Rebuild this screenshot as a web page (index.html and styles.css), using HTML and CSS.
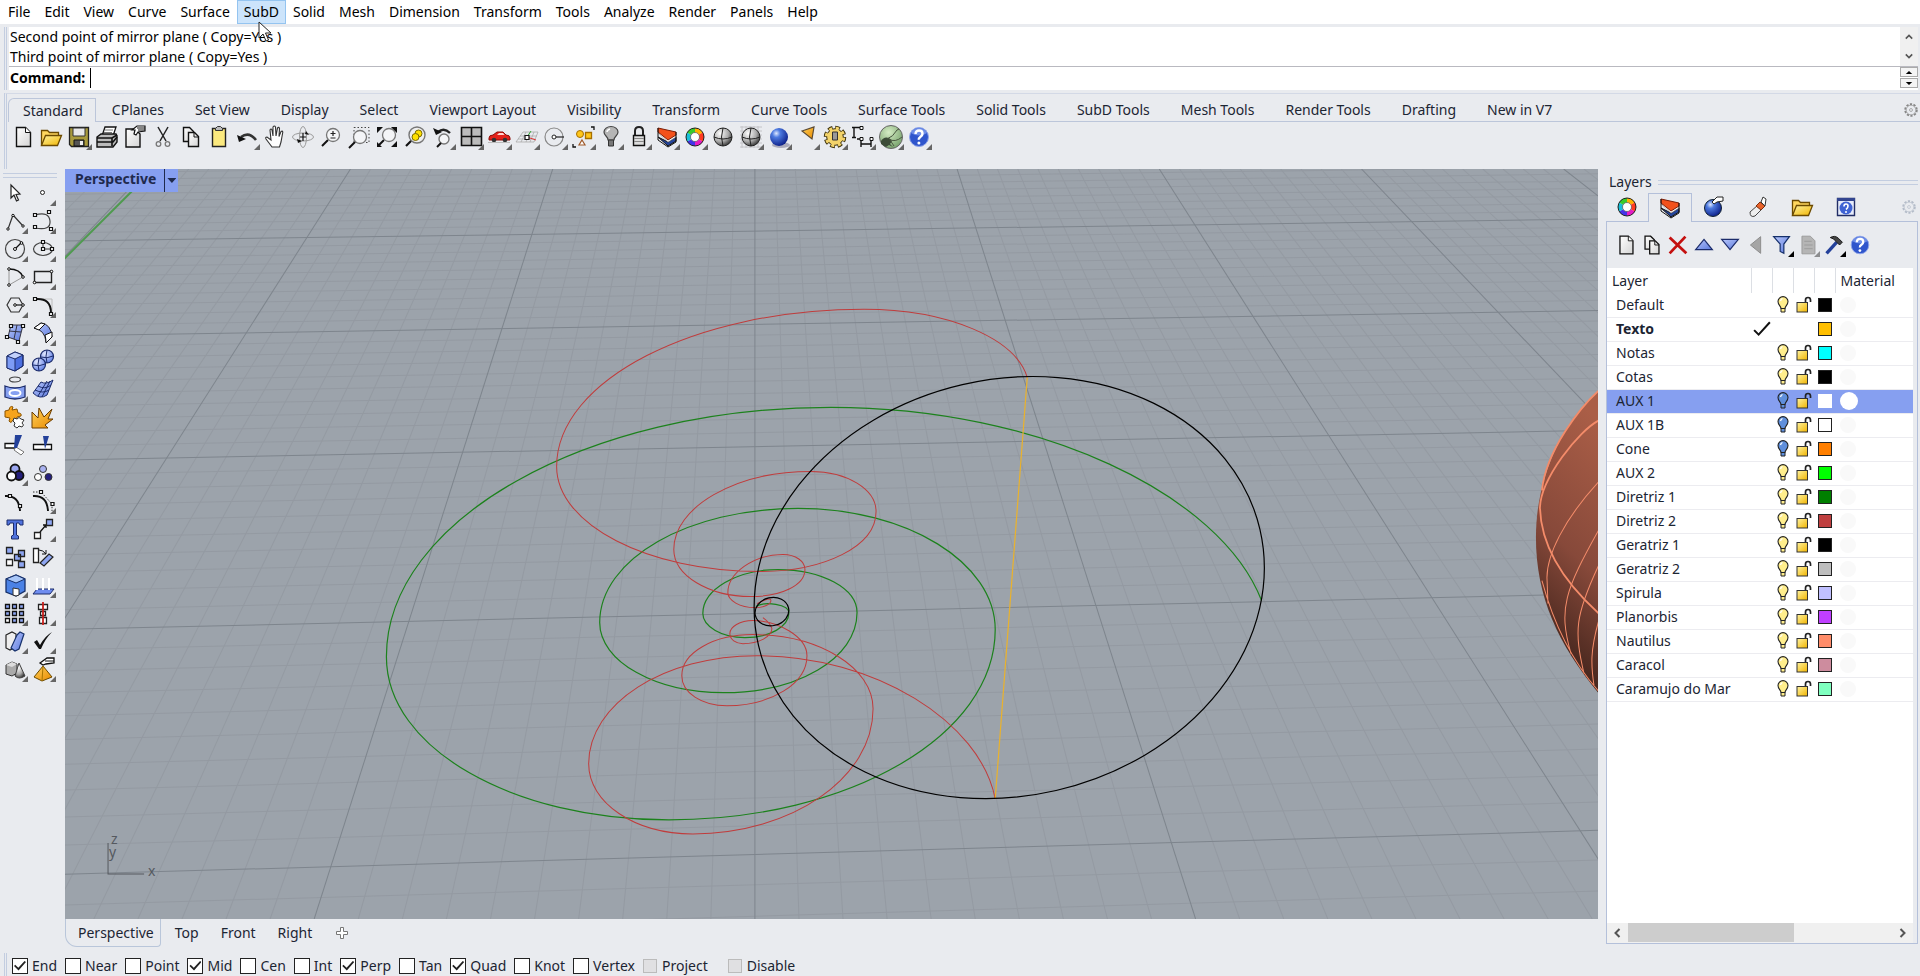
FILE: index.html
```html
<!DOCTYPE html>
<html lang="en">
<head>
    <meta charset="UTF-8">
    <meta name="viewport" content="width=device-width, initial-scale=1.0">
    <title>Rhinoceros</title>
    <link rel="stylesheet" href="styles.css">
</head>
<body>
    <svg class="defs" aria-hidden="true">
        <defs>
            <radialGradient id="gBlue" cx=".35" cy=".3" r=".75"><stop offset="0" stop-color="#dfe9ff"/><stop offset=".3" stop-color="#4d7ae0"/><stop offset="1" stop-color="#0a1c86"/></radialGradient>
            <radialGradient id="gLight" cx=".35" cy=".3" r=".75"><stop offset="0" stop-color="#e4eaff"/><stop offset="1" stop-color="#5c7ce4"/></radialGradient>
            <radialGradient id="gGrey" cx=".35" cy=".3" r=".75"><stop offset="0" stop-color="#fff"/><stop offset=".6" stop-color="#aaa"/><stop offset="1" stop-color="#333"/></radialGradient>
            <radialGradient id="gGreen" cx=".4" cy=".3" r=".8"><stop offset="0" stop-color="#d4ecc4"/><stop offset="1" stop-color="#6d9a62"/></radialGradient>
            <linearGradient id="gYellow" x2="1" y2="1"><stop offset="0" stop-color="#fff3a0"/><stop offset="1" stop-color="#f0b400"/></linearGradient>
            <linearGradient id="gOrange" x2="1" y2="1"><stop offset="0" stop-color="#ffd05a"/><stop offset="1" stop-color="#e88a00"/></linearGradient>
            <linearGradient id="gPage" x2="1" y2="1"><stop offset="0" stop-color="#fff"/><stop offset="1" stop-color="#d4d4d4"/></linearGradient>
            <linearGradient id="gSteel" x2="1" y2="1"><stop offset="0" stop-color="#b9c8fb"/><stop offset="1" stop-color="#5a78dd"/></linearGradient>
            <linearGradient id="gShell" x1=".5" x2=".3" y2="1"><stop offset="0" stop-color="#aa5e47"/><stop offset=".5" stop-color="#87493a"/><stop offset="1" stop-color="#2d1913"/></linearGradient>
        </defs>
        <symbol id="page" viewBox="0 0 28 28"><path d="M7.500 4.500h9l5 5v14h-14z" fill="url(#gPage)" stroke="#111" stroke-width="1.400"/><path d="M16.500 4.500v5h5" fill="#fff" stroke="#111"/></symbol>
        <symbol id="pages" viewBox="0 0 28 28"><path d="M6.500 4.500h6l4 4v10h-10z" fill="url(#gPage)" stroke="#111" stroke-width="1.400"/><path d="M11.500 9.500h6l4 4v10h-10z" fill="url(#gPage)" stroke="#111" stroke-width="1.400"/><path d="M17 9.500v4.500h4.500" fill="none" stroke="#111"/></symbol>
        <symbol id="folder" viewBox="0 0 28 28"><path d="M4.500 22.500v-15h6l2 2h9v4" fill="#ffd75e" stroke="#6b4a00" stroke-width="1.300"/><path d="M4.500 22.500l4-10h16l-4 10z" fill="url(#gYellow)" stroke="#6b4a00" stroke-width="1.300"/></symbol>
        <symbol id="layers" viewBox="0 0 28 28"><path d="M5 14l10 9 8-5v-4l-8 5z" fill="#24449a" stroke="#111"/><path d="M5 10l10 9 8-5v-3z" fill="#fff" stroke="#999" stroke-width=".6"/><path d="M5 5l18 4v3l-8 5L5 9z" fill="#f2511b" stroke="#7c1d05"/><path d="M5 5v12l10 7 8-5V9" fill="none" stroke="#111"/></symbol>
        <symbol id="wheel" viewBox="0 0 28 28"><g fill="none" stroke-width="5"><path d="M14 7.500a6.500 6.500 0 0 1 5.600 3.200" stroke="#ffb000"/><path d="M19.600 10.700a6.500 6.500 0 0 1 0 6.600" stroke="#ff3a20"/><path d="M19.600 17.300a6.500 6.500 0 0 1-5.600 3.200" stroke="#e51cc4"/><path d="M14 20.500a6.500 6.500 0 0 1-5.600-3.200" stroke="#4333e8"/><path d="M8.400 17.300a6.500 6.500 0 0 1 0-6.600" stroke="#17bfd8"/><path d="M8.400 10.700A6.500 6.500 0 0 1 14 7.500" stroke="#38cc2c"/></g><circle cx="14" cy="14" r="9" fill="none" stroke="#222"/><circle cx="14" cy="14" r="4.500" fill="#fff" stroke="#555" stroke-width=".7"/></symbol>
        <symbol id="help" viewBox="0 0 28 28"><circle cx="14" cy="14" r="9.500" fill="#2f55cc" stroke="#8fa4e8"/><path d="M6 10a9 9 0 0 1 16 0q-8 5-16 0z" fill="#6f8ee8"/><path d="M10.500 11q.2-3.500 3.600-3.500t3.400 3.200q0 1.600-2 3t-1.600 3" fill="none" stroke="#fff" stroke-width="2.400"/><circle cx="13.900" cy="20" r="1.500" fill="#fff"/></symbol>
        <symbol id="lens" viewBox="0 0 28 28"><path d="M11 17l-6 6" stroke="#111" stroke-width="2"/><circle cx="16" cy="12" r="6.500" fill="#f4f5f7" stroke="#777" stroke-width="1.300"/></symbol>
        <symbol id="sphere" viewBox="0 0 28 28"><circle cx="14" cy="14" r="9" fill="url(#gGrey)" stroke="#222"/><path d="M5 14q9 4 18 0M14 5q-3 9 0 18" fill="none" stroke="#222"/></symbol>
        <symbol id="gear" viewBox="0 0 28 28"><circle cx="14" cy="14" r="9" fill="none" stroke="currentColor" stroke-width="3" stroke-dasharray="3.400 2.255"/><circle cx="14" cy="14" r="7.500" fill="#e9ebef" stroke="currentColor"/><circle cx="14" cy="14" r="2.300" fill="none" stroke="currentColor"/></symbol>
        <symbol id="bulb" viewBox="0 0 12 18"><path d="M4 12.500C4 10 1 9 1 5.600a5 5 0 0 1 10 0C11 9 8 10 8 12.500z" fill="currentColor" stroke="#222" stroke-width="1.100"/><path d="M4 12.500h4V16H4z" fill="currentColor" stroke="#222"/><path d="M3.500 5q.5-2 2-2.500" stroke="#fff" fill="none" stroke-width="1.300"/></symbol>
        <symbol id="unlock" viewBox="0 0 16 18"><path d="M9.500 7V4q0-2.500 2.500-2.500T14.500 4v2" fill="none" stroke="#222" stroke-width="1.700"/><rect x="1" y="6.500" width="10.500" height="9.500" fill="url(#gYellow)" stroke="#333"/></symbol>
        <symbol id="check" viewBox="0 0 16 14"><path d="M1 8l4 4L15 1" fill="none" stroke="#111" stroke-width="1.800"/></symbol>
    </svg>

    <nav class="menu-bar">
        <button>File</button>
        <button>Edit</button>
        <button>View</button>
        <button>Curve</button>
        <button>Surface</button>
        <button class="active">SubD<svg class="pointer" viewBox="0 0 14 21"><path d="M1 1v16l4-4 3 7 2.500-1-3-7H13z" fill="#fff" stroke="#222"/></svg></button>
        <button>Solid</button>
        <button>Mesh</button>
        <button>Dimension</button>
        <button>Transform</button>
        <button>Tools</button>
        <button>Analyze</button>
        <button>Render</button>
        <button>Panels</button>
        <button>Help</button>
    </nav>

    <section class="command">
        <div class="command-history">
            <div class="command-log">
                <p>Second point of mirror plane ( Copy=Yes )</p>
                <p>Third point of mirror plane ( Copy=Yes )</p>
            </div>
            <div class="log-scroll">
                <button aria-label="Scroll up"><svg viewBox="0 0 10 6"><path d="M1 5l4-4 4 4"/></svg></button>
                <button aria-label="Scroll down"><svg viewBox="0 0 10 6"><path d="M1 1l4 4 4-4"/></svg></button>
            </div>
        </div>
        <div class="command-line">
            <label for="command">Command:</label>
            <input type="text" id="command">
            <div class="spin">
                <button aria-label="Previous"><svg viewBox="0 0 10 6"><path d="M1 5l4-4 4 4z"/></svg></button>
                <button aria-label="Next"><svg viewBox="0 0 10 6"><path d="M1 1l4 4 4-4z"/></svg></button>
            </div>
        </div>
    </section>

    <section class="toolbar-area">
        <div class="toolbar-tabs">
            <button class="active">Standard</button>
            <button>CPlanes</button>
            <button>Set View</button>
            <button>Display</button>
            <button>Select</button>
            <button>Viewport Layout</button>
            <button>Visibility</button>
            <button>Transform</button>
            <button>Curve Tools</button>
            <button>Surface Tools</button>
            <button>Solid Tools</button>
            <button>SubD Tools</button>
            <button>Mesh Tools</button>
            <button>Render Tools</button>
            <button>Drafting</button>
            <button>New in V7</button>
            <button class="options" aria-label="Options"><svg><use href="#gear"/></svg></button>
        </div>
        <div class="toolbar">
            <button class="tool" aria-label="New"><svg><use href="#page"/></svg></button>
            <button class="tool" aria-label="Open"><svg><use href="#folder"/></svg></button>
            <button class="tool more" aria-label="Save"><svg viewBox="0 0 28 28"><path d="M4.500 4.500h19v19h-17l-2-2z" fill="#a89a3c" stroke="#222" stroke-width="1.300"/><path d="M8 5h12v8H8z" fill="#e8e8e8" stroke="#333"/><path d="M9 17h10v6H9z" fill="#555" stroke="#111"/><path d="M15 18h3v4h-3z" fill="#eee"/></svg></button>
            <button class="tool" aria-label="Print"><svg viewBox="0 0 28 28"><path d="M9 13l3-9h11l-3 9z" fill="#fff" stroke="#111" stroke-width="1.300"/><path d="M12 7h8M11 9.500h8" stroke="#777"/><path d="M4 14l4-3h15l1 2v6l-4 5H4z" fill="#bbb" stroke="#111" stroke-width="1.400"/><path d="M4 15h15l5-3M4 19h16l4-5M19 15v8" fill="none" stroke="#111" stroke-width="1.600"/></svg></button>
            <button class="tool" aria-label="Properties"><svg viewBox="0 0 28 28"><path d="M5 6h9l5 5v13H5z" fill="url(#gPage)" stroke="#111" stroke-width="1.400"/><path d="M11 7l5-4 8 0v5l-7 1-2 3-2-1 1-4z" fill="#fff" stroke="#111" stroke-width="1.200"/><path d="M16 5h8M17 7h7" stroke="#111"/></svg></button>
            <button class="tool" aria-label="Cut"><svg viewBox="0 0 28 28"><path d="M9 4l8 14M19 4l-8 14" stroke="#222" stroke-width="1.500"/><circle cx="9.500" cy="21" r="2.300" fill="none" stroke="#777" stroke-width="1.300"/><circle cx="18.500" cy="21" r="2.300" fill="none" stroke="#777" stroke-width="1.300"/></svg></button>
            <button class="tool" aria-label="Copy"><svg><use href="#pages"/></svg></button>
            <button class="tool" aria-label="Paste"><svg viewBox="0 0 28 28"><path d="M7.500 5.500h13v18h-13z" fill="#fbe97e" stroke="#222" stroke-width="1.400"/><path d="M10.500 7.500v-2l2-2h3l2 2v2z" fill="#bbb" stroke="#333"/></svg></button>
            <button class="tool more" aria-label="Undo"><svg viewBox="0 0 28 28"><path d="M8 14q8-6 15 3" fill="none" stroke="#333" stroke-width="2.600"/><path d="M4 12l2 7 7-3z" fill="#111"/></svg></button>
            <button class="tool" aria-label="Pan"><svg viewBox="0 0 28 28"><path d="M11 24l-6-8q-1-2 1-2l4 3-1-10q1-2 2 0l1 6V4q1.500-2 2.500 0l.5 9 1.500-8q1.500-1.500 2 .5l-.5 8 2-5q1.500-1 1.800.5L20 19l-1.500 5z" fill="#fff" stroke="#333" stroke-width="1.100"/></svg></button>
            <button class="tool" aria-label="Rotate view"><svg viewBox="0 0 28 28"><g fill="none" stroke="#999"><ellipse cx="14" cy="14" rx="10.500" ry="4"/><ellipse cx="14" cy="14" rx="3.500" ry="10.500"/></g><path d="M14 10v8M11 14h6" stroke="#111" stroke-width="1.200"/><path d="M8 16l5 2-4 2zM17 8l3 4-4-1z" fill="#111"/></svg></button>
            <button class="tool" aria-label="Zoom dynamic"><svg viewBox="0 0 28 28"><use href="#lens"/><path d="M16 8v5M13.500 10.500h5M13.500 15h5" stroke="#222" stroke-width="1.200"/></svg></button>
            <button class="tool" aria-label="Zoom window"><svg viewBox="0 0 28 28"><path d="M9 4.500h15v15H9z" fill="none" stroke="#444" stroke-dasharray="1.500 2"/><use href="#lens" y="2" x="-1"/></svg></button>
            <button class="tool" aria-label="Zoom extents"><svg viewBox="0 0 28 28"><use href="#lens"/><path d="M4 4h6L4 10zM24 4h-6l6 6zM4 24h5l-5-5zM24 24h-6l6-6z" fill="#111"/></svg></button>
            <button class="tool" aria-label="Zoom selected"><svg viewBox="0 0 28 28"><path d="M11 17l-6 6" stroke="#111" stroke-width="2.200"/><circle cx="16" cy="12" r="8" fill="#eee" stroke="#777" stroke-width="1.400"/><circle cx="17.500" cy="10.500" r="3.500" fill="#ffe100" stroke="#7a6a00"/><circle cx="14.500" cy="14" r="3.500" fill="#ffe100" stroke="#7a6a00"/></svg></button>
            <button class="tool more" aria-label="Undo view change"><svg viewBox="0 0 28 28"><path d="M9 9q6-5 12 1" fill="none" stroke="#222" stroke-width="2.400"/><path d="M4 5l3 7 6-3z" fill="#111"/><circle cx="15" cy="16" r="5" fill="#f4f5f7" stroke="#777" stroke-width="1.400"/><path d="M12 20l-4 4" stroke="#111" stroke-width="2"/></svg></button>
            <button class="tool more" aria-label="4 viewports"><svg viewBox="0 0 28 28"><path d="M4.500 4.500h20v18h-20z" fill="#bbb" stroke="#111" stroke-width="1.600"/><path d="M14.500 4v19M4 13.500h21" stroke="#111" stroke-width="1.600"/></svg></button>
            <button class="tool more" aria-label="Named views"><svg viewBox="0 0 28 28"><path d="M4 15q0-3 4-3l4-3h6l3 3q4 0 4 3v2H4z" fill="#e3211a" stroke="#8a0d08"/><path d="M12 12l2-2h4l1.500 2z" fill="#ffd3cf"/><circle cx="9" cy="17" r="2.300" fill="#333"/><circle cx="20" cy="17" r="2.300" fill="#333"/><path d="M3 19.500h22" stroke="#bbb"/></svg></button>
            <button class="tool more" aria-label="Set CPlane"><svg viewBox="0 0 28 28"><path d="M3 19l7-10h15l-4 10zM8 19l5-10M13 19l4-10M17 19l4-10M5 16h17M7 13h17" fill="none" stroke="#aaa" stroke-width=".8"/><path d="M14 14l9 3" stroke="#d33"/><path d="M14 14l4-6" stroke="#3a3"/><path d="M12 12.500h4v4h-4z" fill="#fff" stroke="#111" stroke-width="1.200"/></svg></button>
            <button class="tool more" aria-label="Set view"><svg viewBox="0 0 28 28"><circle cx="13" cy="14" r="9" fill="none" stroke="#888" stroke-width="1.200"/><path d="M13 14h10" stroke="#222" stroke-width="1.200"/><circle cx="13" cy="14" r="2" fill="#fff" stroke="#222"/></svg></button>
            <button class="tool more" aria-label="Select"><svg viewBox="0 0 28 28"><circle cx="11" cy="11" r="3.500" fill="#ffc61a" stroke="#a66f00"/><path d="M16.500 9.500h6v6h-6z" fill="#ffc61a" stroke="#a66f00" stroke-width="1.300"/><path d="M13 17l3 5h-6z" fill="#fff" stroke="#a05a2a" stroke-width="1.200"/><path d="M22 4h3v3M4 21v3h3" fill="none" stroke="#111" stroke-width="1.300"/></svg></button>
            <button class="tool more" aria-label="Hide"><svg viewBox="0 0 28 28"><path d="M11 17q0-2-2-4t-2-4a7 5.500 0 0 1 14 0q0 2-2 4t-2 4z" fill="#b5b5b5" stroke="#444" stroke-width="1.200"/><path d="M11.500 17h5v6h-5z" fill="#777" stroke="#333"/><path d="M10 9q0-2 3-3" fill="none" stroke="#fff" stroke-width="1.500"/></svg></button>
            <button class="tool more" aria-label="Lock"><svg viewBox="0 0 28 28"><path d="M10 13V8q0-4 4-4t4 4v5" fill="none" stroke="#222" stroke-width="2"/><path d="M8.500 12.500h11v10h-11z" fill="#ddd" stroke="#111" stroke-width="1.400"/><path d="M9 15.500h10M9 18.500h10" stroke="#888"/></svg></button>
            <button class="tool more" aria-label="Layers"><svg><use href="#layers"/></svg></button>
            <button class="tool more" aria-label="Object properties"><svg><use href="#wheel"/></svg></button>
            <button class="tool" aria-label="Shade"><svg><use href="#sphere"/></svg></button>
            <button class="tool more" aria-label="Shaded viewport"><svg viewBox="0 0 28 28"><path d="M3 4h22M3 8h22M3 12h22M3 16h22M3 20h22M3 24h22M5 3v22M9 3v22M13 3v22M17 3v22M21 3v22" stroke="#c4c4c8"/><use href="#sphere"/></svg></button>
            <button class="tool more" aria-label="Render"><svg viewBox="0 0 28 28"><ellipse cx="16" cy="22" rx="9" ry="3" fill="#aab"/><circle cx="14" cy="14" r="9" fill="url(#gBlue)"/></svg></button>
            <button class="tool more" aria-label="Spotlight"><svg viewBox="0 0 28 28"><path d="M9 8l12-4-2 12z" fill="url(#gOrange)" stroke="#5b4a33" stroke-width="1.200"/></svg></button>
            <button class="tool more" aria-label="Options"><svg viewBox="0 0 28 28"><circle cx="14" cy="14" r="8.500" fill="none" stroke="#3b300a" stroke-width="5.500" stroke-dasharray="4.200 2.475"/><circle cx="14" cy="14" r="8.300" fill="#f3d36a" stroke="#3b300a"/><circle cx="14" cy="14" r="8.500" fill="none" stroke="#f3d36a" stroke-width="3.500" stroke-dasharray="3 3.675" stroke-dashoffset="-.600"/><path d="M11.500 9h5v8h-5z" fill="#999" stroke="#333"/></svg></button>
            <button class="tool more" aria-label="Dimension"><svg viewBox="0 0 28 28"><path d="M5 4v11M3 4.500h4M3 14.500h4M7 4.500h4M12 17v7M22 17v7M12 21h10M8 16h4" fill="none" stroke="#111" stroke-width="1.400"/><path d="M11 3.500h3v3h-3zM11 14.500h3v3h-3zM21 14.500h3v3h-3z" fill="#fff" stroke="#111"/></svg></button>
            <button class="tool more" aria-label="Grasshopper"><svg viewBox="0 0 28 28"><circle cx="14" cy="14" r="11.500" fill="url(#gGreen)" stroke="#666"/><path d="M4 18q3-5 8-3l3 3-2 3 3 3-4-2-3 2-5-3z" fill="#3c4c38"/><path d="M10 16q6-2 10-9l2-1M12 16q6 4 13-2M13 17l4 6" fill="none" stroke="#48563f"/></svg></button>
            <button class="tool more" aria-label="Help"><svg><use href="#help"/></svg></button>
        </div>
    </section>

    <main class="workspace">
        <div class="side-toolbar">
            <button class="tool" aria-label="Select objects"><svg viewBox="0 0 28 28"><path d="M10 6v13l3-3 2.500 6 2-1-2.500-5.500 4-.5z" fill="#fff" stroke="#222" stroke-width="1.200"/></svg></button>
            <button class="tool more" aria-label="Point"><svg viewBox="0 0 28 28"><circle cx="13.500" cy="13.500" r="2" fill="#fff" stroke="#222"/></svg></button>
            <button class="tool more" aria-label="Polyline"><svg viewBox="0 0 28 28"><path d="M7 22l5-14 10 11" fill="none" stroke="#333" stroke-width="1.200"/><g fill="#fff" stroke="#111"><circle cx="7" cy="22" r="1.200"/><circle cx="12" cy="8.500" r="1.200"/><circle cx="22" cy="19" r="1.200"/></g></svg></button>
            <button class="tool more" aria-label="Control point curve"><svg viewBox="0 0 28 28"><path d="M6 8q14-4 15 6t-15 7" fill="none" stroke="#444" stroke-width="1.200"/><path d="M4.500 6.500h3v3h-3zM18.500 3.500h3v3h-3zM4.500 18.500h3v3h-3zM20.500 20.500h3v3h-3z" fill="#fff" stroke="#111" stroke-width="1.200"/></svg></button>
            <button class="tool more" aria-label="Circle"><svg viewBox="0 0 28 28"><circle cx="14" cy="14" r="9.500" fill="none" stroke="#444" stroke-width="1.200"/><path d="M14 14l6-6" stroke="#111" stroke-width="1.300"/><circle cx="14" cy="14" r="1.500" fill="#fff" stroke="#111"/><circle cx="20.500" cy="8" r="1.300" fill="#fff" stroke="#111"/></svg></button>
            <button class="tool more" aria-label="Ellipse"><svg viewBox="0 0 28 28"><ellipse cx="14" cy="14" rx="9.500" ry="6.500" fill="none" stroke="#444" stroke-width="1.200"/><path d="M14 7v7h9" fill="none" stroke="#333"/><path d="M12.500 5.500h3v3h-3zM12.500 12.500h3v3h-3zM21.500 12.500h3v3h-3z" fill="#fff" stroke="#111" stroke-width="1.200"/></svg></button>
            <button class="tool more" aria-label="Arc"><svg viewBox="0 0 28 28"><path d="M8 6v16l14-8" fill="none" stroke="#999"/><path d="M8 6q11 0 14 8" fill="none" stroke="#111" stroke-width="1.600"/><g fill="#fff" stroke="#111"><circle cx="8" cy="6" r="1.300"/><circle cx="8" cy="22" r="1.300"/><circle cx="22" cy="14" r="1.300"/></g></svg></button>
            <button class="tool more" aria-label="Rectangle"><svg viewBox="0 0 28 28"><path d="M5.500 8.500h17v11h-17z" fill="none" stroke="#222" stroke-width="1.400"/><circle cx="22.500" cy="8.500" r="1.300" fill="#fff" stroke="#111"/><circle cx="5.500" cy="19.500" r="1.300" fill="#fff" stroke="#111"/></svg></button>
            <button class="tool more" aria-label="Polygon"><svg viewBox="0 0 28 28"><path d="M10 7h8l4 7-4 7h-8l-4-7z" fill="none" stroke="#333" stroke-width="1.200"/><path d="M14 14h8" stroke="#111" stroke-width="1.200"/><circle cx="14" cy="14" r="1.300" fill="#fff" stroke="#111"/><circle cx="22" cy="14" r="1.300" fill="#fff" stroke="#111"/></svg></button>
            <button class="tool more" aria-label="Fillet"><svg viewBox="0 0 28 28"><path d="M7 8h16v14" fill="none" stroke="#bbb"/><path d="M7 8q15-1 15 14" fill="none" stroke="#111" stroke-width="2"/><path d="M4.500 6.500h3v3h-3zM20.500 21.500h3v3h-3z" fill="#fff" stroke="#111" stroke-width="1.200"/></svg></button>
            <button class="tool more" aria-label="Surface from points"><svg viewBox="0 0 28 28"><path d="M10 6h12l-4 16-11-4z" fill="url(#gSteel)" stroke="#334"/><path d="M16 6l-3 14M8 12l12 1" stroke="#334"/><path d="M8.500 5.500h3v3h-3zM20.500 5.500h3v3h-3zM4.500 16.500h3v3h-3zM15.500 21.500h3v3h-3z" fill="#fff" stroke="#111" stroke-width="1.200"/></svg></button>
            <button class="tool more" aria-label="Blend surface"><svg viewBox="0 0 28 28"><path d="M5 9l7-5q10 1 11 14l-6 5q-1-12-12-14z" fill="url(#gSteel)" stroke="#223"/><path d="M5 9l7-5 4 1-6 6zM16 16l7-3v5l-6 6q0-4-1-8z" fill="#fff" stroke="#111"/></svg></button>
            <button class="tool more" aria-label="Box"><svg viewBox="0 0 28 28"><path d="M6 9l8-4 8 3v11l-8 5-8-3z" fill="#4c6fe0" stroke="#1c2c6b"/><path d="M6 9l8 3v12l-8-3z" fill="#7d9cf5"/><path d="M6 9l8-4 8 3-8 4z" fill="#c3d1fb"/><path d="M6 9l8 3 8-4M14 12v12M6 9v12l8 3 8-5V8l-8-3z" fill="none" stroke="#1c2c6b"/></svg></button>
            <button class="tool more" aria-label="Boolean union"><svg viewBox="0 0 28 28"><circle cx="18" cy="9.500" r="6.500" fill="url(#gLight)" stroke="#1c2c6b" stroke-width="1.200"/><circle cx="10" cy="17.500" r="6.500" fill="url(#gLight)" stroke="#1c2c6b" stroke-width="1.200"/><path d="M4 18q6 2 12-1M10 11q-2 6 0 13M18 3q-2 6 0 13M12 10q6 2 12-1" fill="none" stroke="#1c2c6b"/></svg></button>
            <button class="tool more" aria-label="Project curves"><svg viewBox="0 0 28 28"><ellipse cx="14" cy="4.500" rx="5.500" ry="2.500" fill="none" stroke="#444" stroke-width="1.200"/><path d="M4 11q10 4 20 0v11q-10 4-20 0z" fill="#86a0f0" stroke="#1c2c6b" stroke-width="1.300"/><ellipse cx="14" cy="18" rx="5.500" ry="3" fill="#86a0f0" stroke="#fff" stroke-width="2"/></svg></button>
            <button class="tool more" aria-label="Mesh"><svg viewBox="0 0 28 28"><path d="M4 18L12 7q5 3 12-2l-6 15q-7 5-14-2z" fill="url(#gSteel)" stroke="#1c2c6b"/><path d="M9 21l9-15M13 22l8-16M6 15q8 4 14 0M9 11q7 4 13-1" fill="none" stroke="#1c2c6b"/></svg></button>
            <button class="tool" aria-label="Join"><svg viewBox="0 0 28 28"><path d="M4 8l4-1q1-5 4-3l-1 3 5-1 1 4q4 0 3 3l-4 1v4l-4-1q-2 4-4 1l1-3-5-1z" fill="#f7a41d" stroke="#8a5300"/><path d="M13 15l3 1q2-3 4 0l3 1-2 3q3 2 0 4l-3-1-2 2-3-2 1-3-2-2z" fill="#fff" stroke="#333"/></svg></button>
            <button class="tool" aria-label="Explode"><svg viewBox="0 0 28 28"><path d="M3 25V9l6 6 1-10 5 9 8-8-4 10 5 0-8 6 3 3z" fill="url(#gOrange)" stroke="#6a3c00"/></svg></button>
            <button class="tool" aria-label="Trim"><svg viewBox="0 0 28 28"><path d="M4 12.500h11v4.500H4z" fill="#fff" stroke="#111" stroke-width="1.300"/><path d="M15 16l8 5-3 3-7-5z" fill="#fff" stroke="#777"/><path d="M14 4h7l-5 13h-3z" fill="#24419a"/></svg></button>
            <button class="tool" aria-label="Split"><svg viewBox="0 0 28 28"><path d="M4.500 13.500h18v5h-18z" fill="#fff" stroke="#111" stroke-width="1.300"/><path d="M14 5h6l-4 13z" fill="#24419a"/></svg></button>
            <button class="tool more" aria-label="Group"><svg viewBox="0 0 28 28"><g stroke="#111" stroke-width="1.800"><circle cx="14" cy="10" r="4.500" fill="#9aa6f0"/><circle cx="18" cy="16.500" r="4.500" fill="#241f7c"/><circle cx="10.500" cy="17" r="4.500" fill="#fff"/></g></svg></button>
            <button class="tool" aria-label="Ungroup"><svg viewBox="0 0 28 28"><g stroke="#333"><circle cx="14" cy="10" r="3.500" fill="#a8b1f0"/><circle cx="19.500" cy="18" r="3.500" fill="#241f7c"/><circle cx="9" cy="18" r="3.500" fill="#fff"/></g></svg></button>
            <button class="tool" aria-label="Edit points"><svg viewBox="0 0 28 28"><path d="M4 9q14-1 15 15" fill="none" stroke="#111" stroke-width="1.900"/><path d="M7.500 7.500h3v3h-3zM17.500 17.500h3v3h-3z" fill="#fff" stroke="#111" stroke-width="1.200"/></svg></button>
            <button class="tool more" aria-label="Control points"><svg viewBox="0 0 28 28"><path d="M4 9q14-1 15 15" fill="none" stroke="#111" stroke-width="1.900"/><path d="M4 5h8l11 12v7" fill="none" stroke="#333" stroke-dasharray="1.500 1.500"/><path d="M10.500 3.500h3v3h-3zM22 15.500h3v3h-3z" fill="#fff" stroke="#111" stroke-width="1.200"/></svg></button>
            <button class="tool" aria-label="Text"><svg viewBox="0 0 28 28"><path d="M6 5h16v5h-3l-1-2h-2.500v12l2 1v3h-7v-3l2-1V8H9l-1 2H6z" fill="#4f72dd" stroke="#1c2c6b"/></svg></button>
            <button class="tool more" aria-label="Move"><svg viewBox="0 0 28 28"><path d="M11 17l6-7M14 10h3v3" fill="none" stroke="#111" stroke-width="1.300"/><path d="M5.500 17.500h6v6h-6z" fill="#fff" stroke="#222" stroke-width="1.300"/><path d="M17.500 4.500h6v6h-6z" fill="#8ea6f2" stroke="#222" stroke-width="1.300"/></svg></button>
            <button class="tool" aria-label="Copy objects"><svg viewBox="0 0 28 28"><g fill="#8ea6f2" stroke="#222" stroke-width="1.300"><path d="M5.500 4.500h6v6h-6zM17.500 7.500h6v6h-6zM13.500 11.500h6v6h-6zM17.500 18.500h6v6h-6z"/><path d="M5.500 16.500h6v6h-6z" fill="#fff"/></g></svg></button>
            <button class="tool" aria-label="Rotate"><svg viewBox="0 0 28 28"><path d="M4.500 5.500h5v14h-5z" fill="#fff" stroke="#222" stroke-width="1.300"/><path d="M11 20l9-9 4 3-9 9z" fill="#8ea6f2" stroke="#222" stroke-width="1.200"/><path d="M10 7q4 0 7 4M17 7v4h-4" fill="none" stroke="#111"/></svg></button>
            <button class="tool more" aria-label="Solid edit"><svg viewBox="0 0 28 28"><path d="M5 8l10-4 9 4v12l-9 5-10-4z" fill="#4b82e6" stroke="#16306b" stroke-width="1.300"/><path d="M5 8l10 4 9-4-9-4z" fill="#a8c6f8" stroke="#16306b"/><path d="M12 17l6 1v6l-3 1-3-1z" fill="#fff" stroke="#333"/></svg></button>
            <button class="tool more" aria-label="Extrude"><svg viewBox="0 0 28 28"><path d="M4 23l4-5h17l-4 5z" fill="#6f8df0" stroke="#1c2c6b"/><path d="M8 19V7M14 19V7M20 19V7" fill="none" stroke="#fff" stroke-width="2"/></svg></button>
            <button class="tool more" aria-label="Array"><svg viewBox="0 0 28 28"><path d="M4.500 5.500h4v4h-4zM11.500 5.500h4v4h-4zM18.500 5.500h4v4h-4zM4.500 12.500h4v4h-4zM11.500 12.500h4v4h-4zM18.500 12.500h4v4h-4zM11.500 19.500h4v4h-4zM18.500 19.500h4v4h-4z" fill="#8ea6f2" stroke="#111" stroke-width="1.300"/><path d="M4.500 19.500h4v4h-4z" fill="#fff" stroke="#111" stroke-width="1.300"/></svg></button>
            <button class="tool more" aria-label="Align"><svg viewBox="0 0 28 28"><path d="M9.500 5.500h9v5h-9zM11.500 12.500h5v4h-5zM10.500 18.500h7v6h-7z" fill="#fff" stroke="#222" stroke-width="1.300"/><path d="M14 3v23" stroke="#c8201c" stroke-width="1.800"/></svg></button>
            <button class="tool more" aria-label="Set points"><svg viewBox="0 0 28 28"><path d="M5 8l6-3 4 2v13l-6 3-4-2z" fill="#eee" stroke="#222" stroke-width="1.200"/><path d="M16 8l3-3 4 2-5 15-4 2-4-3z" fill="url(#gSteel)" stroke="#16306b" stroke-width="1.200"/></svg></button>
            <button class="tool more" aria-label="Check objects"><svg viewBox="0 0 28 28"><path d="M5 15l3-2 3 5Q16 9 23 5q-7 7-11 17h-2z" fill="#111"/></svg></button>
            <button class="tool more" aria-label="Mesh objects"><svg viewBox="0 0 28 28"><path d="M5 10l6-3 5 2v9l-5 3-6-2z" fill="#aaa" stroke="#333"/><path d="M5 10l6 2 5-3-5-2z" fill="#ddd"/><path d="M18 8l6 13q-6 4-10 0z" fill="url(#gGrey)" stroke="#444"/></svg></button>
            <button class="tool more" aria-label="Render tools"><svg viewBox="0 0 28 28"><path d="M14 11l9 11-10 4-8-4z" fill="url(#gOrange)" stroke="#6a4a00"/><path d="M14 11l-1 15" stroke="#a87400"/><path d="M11 8l7-5h7v5l-8 1-3 1z" fill="#fff" stroke="#111" stroke-width="1.300"/><path d="M16 6h9" stroke="#111"/></svg></button>
        </div>

        <section class="views">
            <div class="viewport">
                <svg class="scene" viewBox="65 169 1533 749" preserveAspectRatio="xMidYMid slice">
                    <g id="grid"></g>
                    <path class="axis-line" d="M65 259L155 169"/>
                    <g class="green">
                        <path d="M1261 600C1220 494 1040 407 831 407C586 407 387 520 387 656C387 748 514 819 669 819C849 819 995 735 995 629C995 562 907 508 798 508C689 508 600 558 600 622C600 661 656 692 724 692C797 692 857 658 857 612C857 588 822 569 778 569C737 569 703 589 703 613C703 626 722 637 745 637C770 637 789 626 789 612C789 604 765 600 756 606"/>
                    </g>
                    <g class="red">
                        <path d="M1027 377C1015 338 947 309 864 309C695 309 557 380 557 466C557 524 648 571 760 571C824 571 876 546 876 511C876 489 847 471 811 471C735 471 674 507 674 549C674 575 709 596 751 596C781 596 805 585 805 569C805 561 796 554 783 554C753 554 728 573 728 592C728 600 740 607 755 607C764 607 771 604 771 600Q771 596 757 603"/>
                        <path d="M995 798C980 721 875 655 757 655C664 655 589 703 589 763C589 802 635 833 693 833C792 833 873 777 873 708C873 667 819 634 753 634C714 634 682 652 682 675C682 692 702 705 727 705C771 705 807 683 807 655C807 636 778 620 753 620C740 620 730 626 730 633C730 639 736 643 743 643C759 643 772 636 772 628Q770 622 763 617"/>
                    </g>
                    <path class="yellow" d="M1027 377L995 798"/>
                    <ellipse class="black" cx="1009" cy="587" rx="257" ry="208" transform="rotate(-13 1009 587)"/>
                    <ellipse class="black" cx="772" cy="611" rx="17" ry="14" transform="rotate(-13 772 611)"/>
                    <path d="M1598 390C1560 423 1535 478 1535 537C1535 597 1558 645 1598 693z" fill="url(#gShell)"/>
                    <g class="shell">
                        <path d="M1598 390C1580 406 1545 450 1541 490M1598 420C1578 430 1540 478 1539 507C1540 550 1568 586 1598 613" stroke-width="1.800"/>
                        <path d="M1598 481C1562 520 1546 555 1546 577L1547 603M1598 529C1564 590 1557 608 1570 653M1598 564C1574 615 1573 630 1583 673M1598 619C1589 650 1590 665 1593 685M1541 580C1555 632 1575 665 1598 691"/>
                    </g>
                    <g class="axes">
                        <path d="M109 842V873H145"/>
                        <text x="112" y="843">z</text>
                        <text x="110" y="856">y</text>
                        <text x="149" y="875">x</text>
                    </g>
                </svg>
                <div class="viewport-title">
                    <span>Perspective</span>
                    <button aria-label="Viewport menu"></button>
                </div>
            </div>
            <div class="view-tabs">
                <button class="active">Perspective</button>
                <button>Top</button>
                <button>Front</button>
                <button>Right</button>
                <button aria-label="New tab"><svg viewBox="0 0 12 12"><path d="M4.500.5h3v4h4v3h-4v4h-3v-4h-4v-3h4z" fill="#fff" stroke="#777"/></svg></button>
            </div>
        </section>

        <aside class="panel">
            <h2>Layers</h2>
            <div class="panel-tabs">
                <button aria-label="Properties"><svg><use href="#wheel"/></svg></button>
                <button class="active" aria-label="Layers"><svg><use href="#layers"/></svg></button>
                <button aria-label="Rendering"><svg viewBox="0 0 28 28"><circle cx="13" cy="15" r="8.500" fill="url(#gBlue)" stroke="#123"/><path d="M12 9l5-5h6v4l-6 1-3 2z" fill="#fff" stroke="#222"/></svg></button>
                <button aria-label="Materials"><svg viewBox="0 0 28 28"><path d="M6 19l8-7 4 4-7 7q-5 2-5-4z" fill="#eee" stroke="#444"/><path d="M12 13l4-4 5 4-4 4z" fill="#e8622a" stroke="#7c2d0d"/><path d="M17 9l2-5 3 2-1 7z" fill="#fff" stroke="#333"/></svg></button>
                <button aria-label="Libraries"><svg><use href="#folder"/></svg></button>
                <button aria-label="Help"><svg viewBox="0 0 28 28"><path d="M5.500 5.500h17v17h-17z" fill="#e7ecfb" stroke="#222e66" stroke-width="1.400"/><path d="M5 5h18v3H5z" fill="#33458f"/><circle cx="14" cy="15" r="6.500" fill="#3f63d3"/><path d="M12 13.500q0-2.500 2-2.500t2 2-2 3.500" fill="none" stroke="#fff" stroke-width="1.600"/><circle cx="14" cy="19" r="1" fill="#fff"/></svg></button>
                <button class="options" aria-label="Panel options"><svg><use href="#gear"/></svg></button>
            </div>
            <div class="panel-body">
                <div class="panel-toolbar">
                    <button class="tool" aria-label="New layer"><svg><use href="#page"/></svg></button>
                    <button class="tool" aria-label="New sublayer"><svg><use href="#pages"/></svg></button>
                    <button class="tool" aria-label="Delete"><svg viewBox="0 0 28 28"><path d="M5 6l18 17M22 5L5 23" stroke="#c4100f" stroke-width="3"/></svg></button>
                    <button class="tool" aria-label="Move up"><svg viewBox="0 0 28 28"><path d="M14 8l9 11H5z" fill="url(#gSteel)" stroke="#1c2c6b" stroke-width="1.300"/></svg></button>
                    <button class="tool" aria-label="Move down"><svg viewBox="0 0 28 28"><path d="M14 19l9-11H5z" fill="url(#gSteel)" stroke="#1c2c6b" stroke-width="1.300"/></svg></button>
                    <button class="tool" aria-label="Move up one parent"><svg viewBox="0 0 28 28"><path d="M19 5v18L8 14z" fill="#a5a5a5" stroke="#888"/></svg></button>
                    <button class="tool more" aria-label="Filter"><svg viewBox="0 0 28 28"><path d="M5 5h17l-6 8v10l-4-2v-8z" fill="url(#gSteel)" stroke="#16306b" stroke-width="1.300"/></svg></button>
                    <button class="tool more off" aria-label="Layer state"><svg viewBox="0 0 28 28"><path d="M7.500 4.500h9l5 5v14h-14z" fill="#b5b5b5" stroke="#999"/><path d="M10 10h8M10 14h9M10 18h9" stroke="#999"/></svg></button>
                    <button class="tool more" aria-label="Tools"><svg viewBox="0 0 28 28"><path d="M6 23L17 11" stroke="#24419a" stroke-width="3.600"/><path d="M10 6q5-3 9 1l4 4-3 3-4-4q-2-3-6-4z" fill="#444" stroke="#111"/></svg></button>
                    <button class="tool" aria-label="Help"><svg><use href="#help"/></svg></button>
                </div>
                <div class="layer-list">
                    <table>
                        <thead>
                            <tr>
                                <th class="name">Layer</th>
                                <th></th>
                                <th></th>
                                <th></th>
                                <th></th>
                                <th class="material">Material</th>
                            </tr>
                        </thead>
                        <tbody id="layers-body"></tbody>
                    </table>
                </div>
                <div class="h-scroll">
                    <button aria-label="Scroll left"><svg viewBox="0 0 6 10"><path d="M5 1L1 5l4 4"/></svg></button>
                    <div class="track"><div class="thumb"></div></div>
                    <button aria-label="Scroll right"><svg viewBox="0 0 6 10"><path d="M1 1l4 4-4 4"/></svg></button>
                </div>
            </div>
        </aside>
    </main>

    <footer class="osnap">
        <label><input type="checkbox" checked>End</label>
        <label><input type="checkbox">Near</label>
        <label><input type="checkbox">Point</label>
        <label><input type="checkbox" checked>Mid</label>
        <label><input type="checkbox">Cen</label>
        <label><input type="checkbox">Int</label>
        <label><input type="checkbox" checked>Perp</label>
        <label><input type="checkbox">Tan</label>
        <label><input type="checkbox" checked>Quad</label>
        <label><input type="checkbox">Knot</label>
        <label><input type="checkbox">Vertex</label>
        <label class="wide"><input type="checkbox" disabled>Project</label>
        <label class="wide"><input type="checkbox" disabled>Disable</label>
    </footer>

    <script src="script.js"></script>
</body>
</html>
```

FILE: styles.css
```css
* {
    box-sizing: border-box;
}

body {
    margin: 0;
    height: 100vh;
    display: flex;
    flex-direction: column;
    overflow: hidden;
    background-color: #e9ebef;
    color: #1c2533;
    font-family: "Segoe UI", "Noto Sans", sans-serif;
    font-size: 14px;
    line-height: 20px;
}

button {
    padding: 0;
    border: none;
    background: none;
    color: inherit;
    font: inherit;
    white-space: nowrap;
}

button svg {
    display: block;
}

.defs {
    position: absolute;
    width: 0;
    height: 0;
}

/* menu */
.menu-bar {
    display: flex;
    height: 24px;
    padding-left: 1px;
    background-color: #fff;
    color: #000;
}

.menu-bar button {
    position: relative;
    padding: 0 6px;
    border: 1px solid transparent;
}

.menu-bar .active {
    background-color: #cce4fb;
    border-color: #94c4f0;
}

.pointer {
    position: absolute;
    z-index: 2;
    left: 20px;
    top: 20px;
    width: 14px;
    height: 21px;
}

/* command prompt */
.command {
    margin: 3px 2px 0 4px;
    padding-left: 2px;
    height: 63px;
    border-left: 3px double #c3cde0;
    color: #000;
}

.command-history {
    display: flex;
    height: 39px;
    background-color: #fff;
}

.command-log {
    flex: 1;
    padding-left: 1px;
}

.command-log p {
    margin: 0;
}

.log-scroll {
    width: 18px;
    display: flex;
    flex-direction: column;
    align-items: center;
    justify-content: space-around;
    background-color: #f0f0f0;
}

.log-scroll svg,
.h-scroll svg {
    fill: none;
    stroke: #555;
    stroke-width: 2;
}

.log-scroll svg {
    width: 8px;
    height: 6px;
}

.command-line {
    display: flex;
    align-items: center;
    height: 24px;
    padding: 0 0 2px 1px;
    border-top: 1px solid #b9b9c0;
    background-color: #fff;
}

.command-line label {
    font-weight: bold;
}

.command-line input {
    flex: 1;
    height: 20px;
    margin-left: 5px;
    padding: 0 2px;
    border: none;
    border-left: 1px solid #000;
    outline: none;
    font: inherit;
}

.spin {
    display: flex;
    flex-direction: column;
    width: 18px;
    gap: 1px;
}

.spin button {
    display: flex;
    align-items: center;
    justify-content: center;
    height: 10px;
    border: 1px solid #aaa;
    background-color: #f4f4f4;
}

.spin svg {
    width: 8px;
    height: 5px;
}

/* main toolbar */
.toolbar-area {
    height: 76px;
    margin: 3px 0 0 4px;
    padding-left: 1px;
    border-top: 1px solid #d3d9e6;
    border-left: 3px double #c3cde0;
}

.toolbar-tabs {
    display: flex;
    gap: 1px;
    height: 28px;
    padding-top: 4px;
    border-bottom: 1px solid #bcc6da;
}

.toolbar-tabs button {
    height: 24px;
    padding: 0 15px;
}

.toolbar-tabs .active {
    padding: 0 12px 0 14px;
    border: 1px solid #bcc6da;
    border-bottom: none;
    border-top-left-radius: 6px;
    background-color: #e9ebef;
}

.toolbar-tabs .options {
    margin-left: auto;
    padding: 0;
    color: #888;
}

.toolbar-tabs .options svg {
    width: 18px;
    height: 18px;
}

.toolbar {
    display: flex;
    padding: 1px 0 0 1px;
}

.tool {
    position: relative;
    width: 28px;
    height: 28px;
}

.tool svg {
    width: 28px;
    height: 28px;
}

.tool.more::after {
    content: "";
    position: absolute;
    right: 1px;
    bottom: 1px;
    width: 6px;
    height: 6px;
    background-color: #666;
    clip-path: polygon(100% 0, 100% 100%, 0 100%);
}

/* workspace */
.workspace {
    flex: 1;
    display: flex;
    min-height: 0;
}

.side-toolbar {
    width: 65px;
    padding: 4px 7px 0 1px;
    display: grid;
    grid-template-columns: 28px 28px;
    grid-template-rows: 6px;
    grid-auto-rows: 28px;
    align-content: start;
}

.side-toolbar::before {
    content: "";
    grid-column: 1 / 3;
    height: 3px;
    margin-left: 2px;
    border-top: 1px solid #c3cde0;
    border-bottom: 1px solid #c3cde0;
}

.views {
    flex: 1;
    min-width: 0;
    display: flex;
    flex-direction: column;
}

.viewport {
    position: relative;
    flex: 1;
    min-height: 0;
    background-color: #9ca3ab;
}

.scene {
    display: block;
    width: 100%;
    height: 100%;
}

.scene path,
.scene line,
.scene ellipse {
    fill: none;
}

.scene path[fill] {
    fill: url(#gShell);
}

.minor {
    stroke: #949aa2;
}

.major {
    stroke: #7e858d;
}

.axis-line {
    stroke: #4f9a4f;
    stroke-width: 2;
}

.green {
    stroke: #1c821c;
    stroke-width: 1.200;
}

.red {
    stroke: #c03c3c;
}

.yellow {
    stroke: #eab22c;
    stroke-width: 1.200;
}

.black {
    stroke: #000;
    stroke-width: 1.200;
}

.shell {
    stroke: #f48c6a;
}

.axes {
    stroke: #55595f;
}

.axes text {
    stroke: none;
    fill: #55595f;
    font-size: 14px;
}

.viewport-title {
    position: absolute;
    left: 0;
    top: 0;
    display: flex;
    height: 23px;
    padding-left: 10px;
    background-color: #869ff0;
    color: #1f2a4d;
    font-weight: bold;
}

.viewport-title button {
    width: 14px;
    margin-left: 8px;
    border-left: 1px solid #1f2a4d;
}

.viewport-title button::after {
    content: "";
    display: block;
    width: 9px;
    height: 5px;
    margin-left: 2px;
    background-color: #1f2a4d;
    clip-path: polygon(0 0, 100% 0, 50% 100%);
}

.view-tabs {
    display: flex;
    height: 28px;
}

.view-tabs button {
    padding: 0 11px;
}

.view-tabs .active {
    margin-right: 3px;
    padding: 0 6px 0 12px;
    border: 1px solid #b9c6da;
    border-top: none;
    border-radius: 0 0 4px 12px;
}

.view-tabs svg {
    width: 12px;
    height: 12px;
    margin-left: 2px;
}

/* layers panel */
.panel {
    width: 314px;
    margin-left: 8px;
    padding: 3px 2px 0 0;
    display: flex;
    flex-direction: column;
}

.panel h2 {
    display: flex;
    align-items: center;
    gap: 6px;
    margin: 0 0 0 3px;
    font-size: 14px;
    font-weight: normal;
    line-height: 20px;
}

.panel h2::after {
    content: "";
    flex: 1;
    height: 3px;
    border-top: 1px solid #c3cde0;
    border-bottom: 1px solid #c3cde0;
}

.panel-tabs {
    display: flex;
    height: 29px;
    padding-top: 1px;
}

.panel-tabs button {
    width: 44px;
    display: flex;
    align-items: center;
    justify-content: center;
}

.panel-tabs button:first-child {
    width: 42px;
}

.panel-tabs svg {
    width: 28px;
    height: 28px;
}

.panel-tabs .active {
    position: relative;
    height: 29px;
    border: 1px solid #b4c0da;
    border-bottom: none;
    background-color: #e9ebef;
}

.panel-tabs .options {
    width: 18px;
    margin-left: auto;
    color: #b4bcc9;
}

.panel-tabs .options svg {
    width: 20px;
    height: 20px;
}

.panel-body {
    flex: 1;
    min-height: 0;
    margin-bottom: 3px;
    padding-right: 4px;
    display: flex;
    flex-direction: column;
    border: 1px solid #b4c0da;
}

.panel-toolbar {
    display: flex;
    height: 46px;
    padding: 10px 0 0 6px;
}

.panel-toolbar .tool,
.panel-toolbar .tool svg {
    width: 26px;
    height: 26px;
}

.panel-toolbar .tool.more::after {
    background-color: #000;
}

.panel-toolbar .off::after {
    opacity: 0.4;
}

.layer-list {
    flex: 1;
    background-color: #fff;
}

.layer-list table {
    width: 100%;
    table-layout: fixed;
    border-collapse: collapse;
}

.layer-list th,
.layer-list td {
    width: 21px;
    padding: 0;
    text-align: left;
    font-weight: normal;
}

.layer-list th {
    height: 25px;
    border-right: 1px solid #dcdfe4;
}

.layer-list td {
    height: 24px;
    border-bottom: 1px solid #ececf0;
}

.layer-list svg {
    display: block;
    margin: 0 auto;
    width: 18px;
    height: 18px;
}

.layer-list .name {
    width: 144px;
    padding-left: 9px;
}

.layer-list th.name {
    padding-left: 5px;
}

.layer-list .material {
    width: auto;
    padding-left: 5px;
    border-right: none;
}

.layer-list .current .name {
    font-weight: bold;
}

.layer-list .selected {
    background-color: #869ff0;
}

.bulb-on {
    color: #ffee8c;
}

.bulb-off {
    color: #5f8fdc;
}

.swatch {
    width: 14px;
    height: 14px;
    margin-left: 4px;
    border: 1px solid #222;
}

.selected .swatch {
    border-color: #fff;
}

.dot {
    width: 16px;
    height: 16px;
    border-radius: 50%;
    background-color: #f9f9f9;
}

.selected .dot {
    width: 18px;
    height: 18px;
    background-color: #fff;
}

.h-scroll {
    display: flex;
    height: 20px;
    background-color: #f0f0f0;
}

.h-scroll button {
    width: 21px;
}

.h-scroll svg {
    width: 7px;
    height: 10px;
    margin: 0 auto;
}

.track {
    flex: 1;
}

.thumb {
    width: 63%;
    height: 19px;
    background-color: #cdcdcd;
}

/* object snaps */
.osnap {
    display: flex;
    gap: 8px;
    height: 23px;
    margin: 6px 0 0 4px;
    padding: 3px 0 0 5px;
    border-left: 3px double #c3cde0;
}

.osnap label {
    display: flex;
    align-items: center;
    gap: 4px;
}

.osnap input {
    appearance: none;
    width: 16px;
    height: 16px;
    margin: 0;
    border: 1px solid #222;
    background-color: #fff;
}

.osnap input:checked::before {
    content: "";
    display: block;
    width: 12px;
    height: 10px;
    margin: 2px 1px;
    background-color: #222;
    clip-path: polygon(0 50%, 10% 38%, 36% 68%, 88% 0, 100% 10%, 38% 95%);
}

.osnap input:disabled {
    width: 14px;
    height: 14px;
    border-color: #bbb;
    background-color: #e0e0e2;
}

.osnap .wide {
    gap: 5px;
    margin-right: 12px;
}
```

FILE: script.js
```js
const layers = [
    { name: 'Default', color: '#000000', on: true },
    { name: 'Texto', color: '#ffbf00', current: true },
    { name: 'Notas', color: '#00ffff', on: true },
    { name: 'Cotas', color: '#000000', on: true },
    { name: 'AUX 1', color: '#ffffff', on: false, selected: true },
    { name: 'AUX 1B', color: '#ffffff', on: false },
    { name: 'Cone', color: '#ff7f00', on: false },
    { name: 'AUX 2', color: '#00ff00', on: true },
    { name: 'Diretriz 1', color: '#007f00', on: true },
    { name: 'Diretriz 2', color: '#bf3f3f', on: true },
    { name: 'Geratriz 1', color: '#000000', on: true },
    { name: 'Geratriz 2', color: '#bebebe', on: true },
    { name: 'Spirula', color: '#bfbfff', on: true },
    { name: 'Planorbis', color: '#bf3fff', on: true },
    { name: 'Nautilus', color: '#ff8c69', on: true },
    { name: 'Caracol', color: '#cd8c9e', on: true },
    { name: 'Caramujo do Mar', color: '#7fffbf', on: true }
];

function renderLayers() {
    const body = document.getElementById('layers-body');

    layers.forEach(layer => {
        const row = document.createElement('tr');
        if (layer.current) row.classList.add('current');
        if (layer.selected) row.classList.add('selected');

        const bulb = layer.current ? '' : `<svg class="${layer.on ? 'bulb-on' : 'bulb-off'}"><use href="#bulb"/></svg>`;
        const lock = layer.current ? '' : '<svg><use href="#unlock"/></svg>';
        const check = layer.current ? '<svg><use href="#check"/></svg>' : '';

        row.innerHTML = `
            <td class="name">${layer.name}</td>
            <td>${check}</td>
            <td>${bulb}</td>
            <td>${lock}</td>
            <td><div class="swatch" style="background-color: ${layer.color}"></div></td>
            <td class="material"><div class="dot"></div></td>`;
        body.appendChild(row);
    });
}

// Construction plane grid, drawn in two point perspective
function renderGrid() {
    const grid = document.getElementById('grid');
    const minor = [];
    const major = [];

    // lines running away from the camera
    const top = { x: 755, y: -466 };
    for (let i = -60; i <= 60; i++) {
        const slope = i * 0.0318;
        const x1 = top.x + slope * (169 - top.y);
        const x2 = top.x + slope * (918 - top.y);
        (i % 10 === 0 ? major : minor).push([x1, 169, x2, 918]);
    }

    // lines running across
    const side = { x: 44400, y: -397 };
    for (let i = -6; i <= 52; i++) {
        const y = 1 / (0.0007578 + i * 0.00001692) - 466;
        const slope = (y - side.y) / (top.x - side.x);
        (i % 10 === 0 ? major : minor).push([65, y + slope * (65 - top.x), 1598, y + slope * (1598 - top.x)]);
    }

    const draw = (lines, name) => lines.map(l =>
        `<line class="${name}" x1="${l[0]}" y1="${l[1]}" x2="${l[2]}" y2="${l[3]}"/>`).join('');
    grid.innerHTML = draw(minor, 'minor') + draw(major, 'major');
}

renderLayers();
renderGrid();
```
